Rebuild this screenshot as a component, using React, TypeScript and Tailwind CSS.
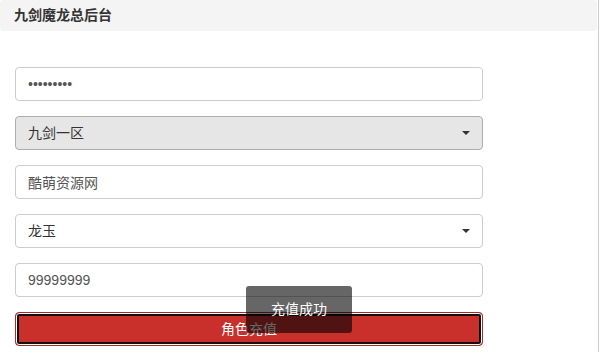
import { useState } from 'react';

const font = { fontFamily: '"Liberation Sans", "Noto Sans CJK SC", sans-serif' };

function Caret() {
  return (
    <span className="pointer-events-none absolute right-[13px] top-1/2 -translate-y-1/2 border-x-[4px] border-t-[4px] border-x-transparent border-t-[#333]" />
  );
}

export default function App() {
  const [password] = useState('123456789');
  const [account, setAccount] = useState('酷萌资源网');
  const [amount, setAmount] = useState('99999999');

  return (
    <div className="relative h-[352px] w-[600px] bg-white text-[14px] text-[#555]" style={font}>
      <div className="h-[352px] w-[599px] border-r border-[#ccc]">
        {/* 标题 */}
        <div className="flex h-[31px] w-[597px] items-center rounded-[4px] bg-[#f4f4f4] pl-[14px] text-[14px] font-bold text-[#333]">
          九剑魔龙总后台
        </div>

        {/* 表单 */}
        <div className="flex w-[468px] flex-col gap-[15px] pl-[15px] pt-[36px] box-content">
          <input
            type="password"
            readOnly
            value={password}
            className="h-[34px] w-full rounded-[4px] border border-[#ccc] bg-white px-[12px] text-[14px] text-[#555] outline-none"
          />
          <div className="relative">
            <div className="flex h-[34px] w-full items-center rounded-[4px] border border-[#adadad] bg-[#e6e6e6] px-[12px] text-[#333]">
              九剑一区
            </div>
            <Caret />
          </div>
          <input
            value={account}
            onChange={(e) => setAccount(e.target.value)}
            className="h-[34px] w-full rounded-[4px] border border-[#ccc] bg-white px-[12px] text-[14px] text-[#555] outline-none"
          />
          <div className="relative">
            <div className="flex h-[34px] w-full items-center rounded-[4px] border border-[#ccc] bg-white px-[12px] text-[#333]">
              龙玉
            </div>
            <Caret />
          </div>
          <input
            value={amount}
            onChange={(e) => setAmount(e.target.value)}
            className="h-[34px] w-full rounded-[4px] border border-[#ccc] bg-white px-[12px] text-[14px] text-[#555] outline-none"
          />
          <button className="h-[34px] w-full rounded-[4px] border border-[#ac2925] bg-[#c9302c] text-[14px] text-white shadow-[inset_0_0_0_1px_#fff,inset_0_0_0_3px_#111]">
            角色充值
          </button>
        </div>
      </div>

      {/* 提示 */}
      <div className="absolute left-[246px] top-[286px] flex h-[47px] w-[106px] items-center justify-center rounded-[3px] bg-black/60 text-[14px] text-white">
        充值成功
      </div>
    </div>
  );
}
